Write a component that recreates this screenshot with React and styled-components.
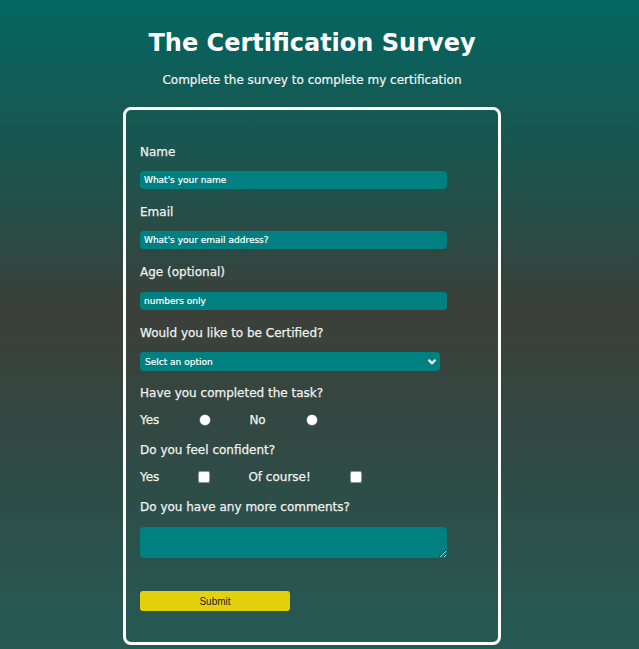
import React from 'react';
import styled, {createGlobalStyle} from "styled-components";

const GlobalStyle = createGlobalStyle`
    html, body {
        margin: 0;
        padding: 0;
    }
    body {
        font-family: "DejaVu Sans", Verdana, sans-serif;
        color: #f1f1f1;
    }
`

const Page = styled.div`
    min-height: 649px;
    padding-right: 15px;
    box-sizing: border-box;
    background: linear-gradient(180deg, #036661 0%, #22504a 30%, #3b4039 48%, #2f4b45 72%, #265a55 100%);
    display: flex;
    flex-direction: column;
    align-items: center;
    overflow: hidden;
`

const Title = styled.h1`
    margin: 28px 0 0;
    font-size: 24px;
    line-height: 30px;
    font-weight: 700;
    color: #fff;
`

const Subtitle = styled.p`
    margin: 14px 0 0;
    font-size: 12px;
    line-height: 16px;
    color: #f4f4f4;
    -webkit-text-stroke: 0.2px #f4f4f4;
`

const SurveyForm = styled.form`
    margin-top: 19px;
    width: 378px;
    box-sizing: border-box;
    border: 3px solid #fff;
    border-radius: 8px;
    padding: 34px 14px 31px;
    display: flex;
    flex-direction: column;
`

const Group = styled.div`
    display: flex;
    flex-direction: column;
    margin-bottom: ${props => props.$space ?? 15}px;
`

const Label = styled.label`
    font-size: 12px;
    line-height: 16px;
    margin-bottom: ${props => props.$space || 11}px;
    color: #f1f1f1;
    -webkit-text-stroke: 0.25px #f1f1f1;
`

const TextInput = styled.input`
    width: 307px;
    height: 18px;
    box-sizing: border-box;
    border: none;
    border-radius: 4px;
    background: #008080;
    padding: 0 4px;
    font-family: "DejaVu Sans", Verdana, sans-serif;
    font-size: 9px;
    color: #fff;
    outline: none;
    -webkit-text-stroke: 0.2px #fff;

    &::placeholder {
        color: #fff;
        opacity: 1;
    }
`

const SelectWrap = styled.div`
    position: relative;
    width: 300px;
    height: 19px;
`

const Select = styled.select`
    appearance: none;
    display: block;
    width: 100%;
    height: 100%;
    margin: 0;
    border: none;
    border-radius: 4px;
    background: #008080;
    padding: 0 5px;
    font-family: "DejaVu Sans", Verdana, sans-serif;
    font-size: 9px;
    color: #fff;
    outline: none;
    -webkit-text-stroke: 0.2px #fff;
`

const Chevron = styled.svg`
    position: absolute;
    right: 3px;
    top: 6px;
    pointer-events: none;
`

const ChoiceRow = styled.div`
    display: flex;
    align-items: center;
    font-size: 12px;
    line-height: 16px;
`

const ChoiceText = styled.span`
    color: #f1f1f1;
    -webkit-text-stroke: 0.25px #f1f1f1;
`

const Radio = styled.input.attrs({type: 'radio'})`
    appearance: none;
    width: 10px;
    height: 10px;
    margin: 0 39px 0 ${props => props.$offset}px;
    border-radius: 50%;
    background: #fff;
    box-shadow: 0 0 0 0.5px #9aa;
`

const Check = styled.input.attrs({type: 'checkbox'})`
    appearance: none;
    width: 10px;
    height: 10px;
    margin: 0 39px 0 ${props => props.$offset}px;
    border-radius: 1px;
    background: #fff;
    box-shadow: 0 0 0 1px #8a9a96;
`

const Comments = styled.textarea`
    width: 307px;
    height: 31px;
    box-sizing: border-box;
    border: none;
    border-radius: 4px;
    background: #008080;
    outline: none;
    display: block;
    margin: 0;
`

const SubmitButton = styled.button`
    display: block;
    margin-top: 33px;
    width: 150px;
    height: 20px;
    border: none;
    border-radius: 3px;
    background: #e3d10c;
    font-family: "Liberation Sans", Arial, sans-serif;
    font-size: 10px;
    color: #222;
    padding: 0;
`

const App = () => {
    return (
        <>
            <GlobalStyle/>
            <Page>
                <Title>The Certification Survey</Title>
                <Subtitle>Complete the survey to complete my certification</Subtitle>
                <SurveyForm onSubmit={e => e.preventDefault()}>
                    <Group>
                        <Label>Name</Label>
                        <TextInput placeholder="What's your name"/>
                    </Group>
                    <Group>
                        <Label>Email</Label>
                        <TextInput placeholder="What's your email address?"/>
                    </Group>
                    <Group>
                        <Label $space={12}>Age (optional)</Label>
                        <TextInput placeholder="numbers only"/>
                    </Group>
                    <Group $space={14}>
                        <Label>Would you like to be Certified?</Label>
                        <SelectWrap>
                            <Select defaultValue="">
                                <option value="">Selct an option</option>
                                <option value="yes">Yes</option>
                                <option value="no">No</option>
                            </Select>
                            <Chevron width="10" height="8" viewBox="0 0 10 8">
                                <path d="M1.5 1.8 L5 5.3 L8.5 1.8" fill="none" stroke="#fff" strokeWidth="2.2"/>
                            </Chevron>
                        </SelectWrap>
                    </Group>
                    <Group $space={14}>
                        <Label>Have you completed the task?</Label>
                        <ChoiceRow>
                            <ChoiceText>Yes</ChoiceText>
                            <Radio name="task" $offset={41}/>
                            <ChoiceText>No</ChoiceText>
                            <Radio name="task" $offset={41}/>
                        </ChoiceRow>
                    </Group>
                    <Group $space={14}>
                        <Label>Do you feel confident?</Label>
                        <ChoiceRow>
                            <ChoiceText>Yes</ChoiceText>
                            <Check $offset={40}/>
                            <ChoiceText>Of course!</ChoiceText>
                            <Check $offset={40}/>
                        </ChoiceRow>
                    </Group>
                    <Group $space={0}>
                        <Label $space={12}>Do you have any more comments?</Label>
                        <Comments/>
                    </Group>
                    <div>
                        <SubmitButton type="submit">Submit</SubmitButton>
                    </div>
                </SurveyForm>
            </Page>
        </>
    );
}

export default App;
